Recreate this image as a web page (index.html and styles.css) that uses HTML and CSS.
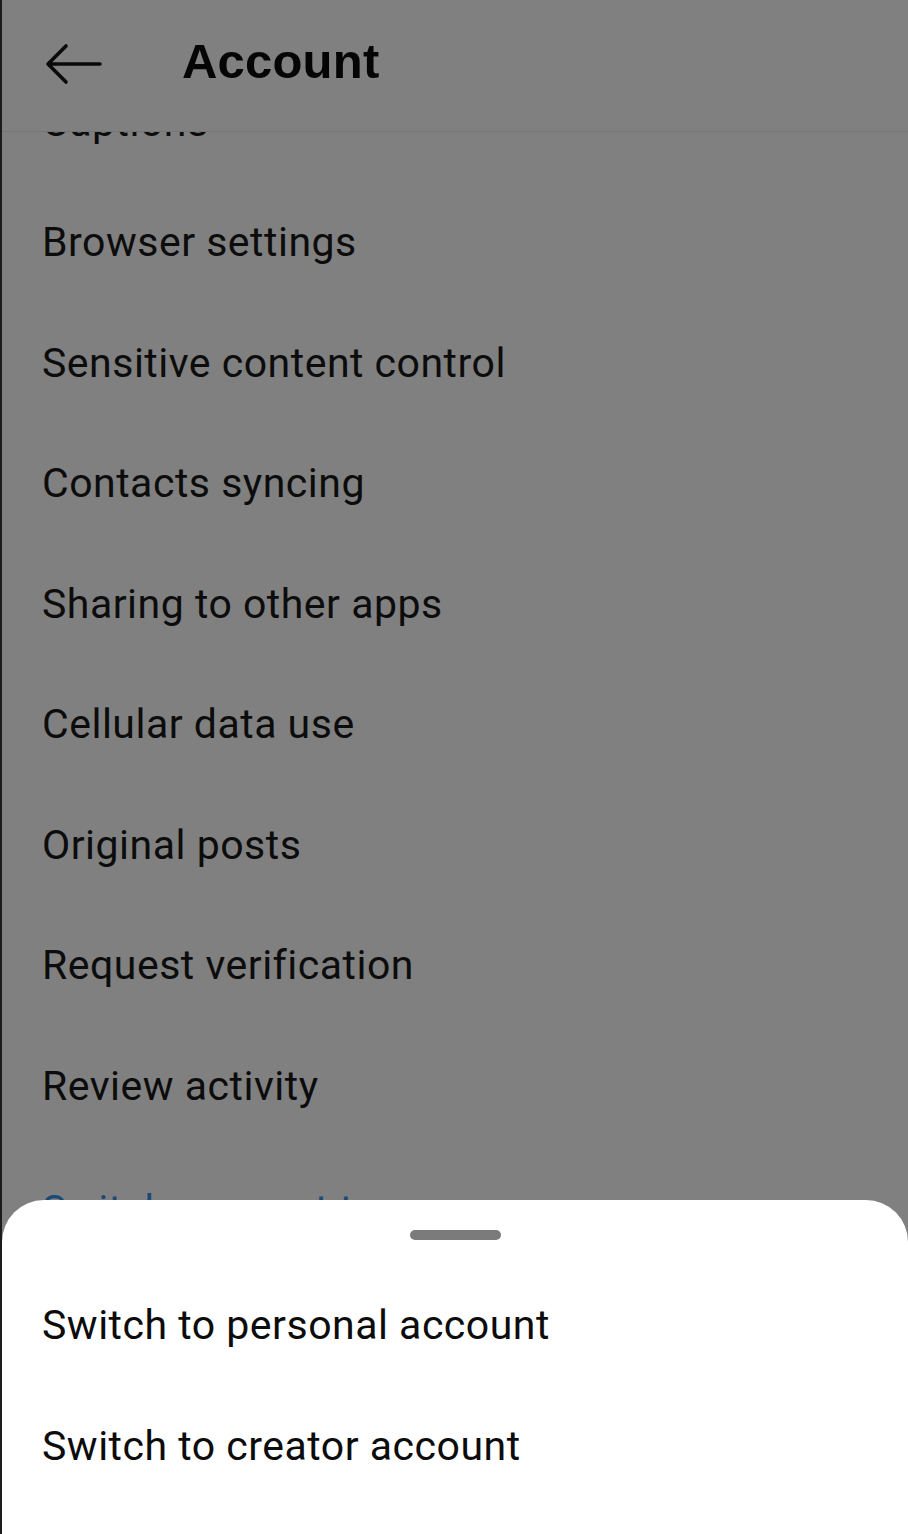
FILE: index.html
```html
<!DOCTYPE html>
<html>
<head>
<meta charset="utf-8">
<link rel="stylesheet" href="styles.css">
</head>
<body>
<div class="screen">
  <header class="topbar">
    <svg class="back" width="58" height="42" viewBox="0 0 58 42">
      <path d="M56 21 H4 M22 3 L4 21 L22 39" fill="none" stroke="#0a0a0a" stroke-width="3.6" stroke-linecap="round" stroke-linejoin="round"/>
    </svg>
    <h1 class="title">Account</h1>
  </header>
  <div class="scroll">
    <ul class="list">
      <li class="row">Captions</li>
      <li class="row">Browser settings</li>
      <li class="row">Sensitive content control</li>
      <li class="row">Contacts syncing</li>
      <li class="row">Sharing to other apps</li>
      <li class="row">Cellular data use</li>
      <li class="row">Original posts</li>
      <li class="row">Request verification</li>
      <li class="row">Review activity</li>
      <li class="row link">Switch account type</li>
    </ul>
  </div>
  <div class="sheet">
    <div class="handle"></div>
    <div class="sheet-row">Switch to personal account</div>
    <div class="sheet-row">Switch to creator account</div>
  </div>
</div>
</body>
</html>
```

FILE: styles.css
```css
* { box-sizing: border-box; }
html, body { margin: 0; padding: 0; }
body {
  width: 908px;
  height: 1534px;
  overflow: hidden;
  background: #808080;
  font-family: Roboto, "Noto Sans", sans-serif;
}
.screen {
  position: relative;
  width: 908px;
  height: 1534px;
  border-left: 2px solid #1c1c1c;
  background: #808080;
  display: flex;
  flex-direction: column;
  overflow: hidden;
}
.topbar {
  height: 132px;
  flex: none;
  display: flex;
  align-items: center;
  padding-left: 42px;
  border-bottom: 1px solid #757575;
  padding-bottom: 4px;
}
.back { display: block; flex: none; }
.title {
  margin: 0 0 5px 80px;
  font-family: "Liberation Sans", Arial, sans-serif;
  font-weight: 700;
  font-size: 49px;
  color: #050505;
  letter-spacing: 0.2px;
}
.scroll {
  flex: 1;
  overflow: hidden;
}
.list {
  list-style: none;
  margin: -70.5px 0 0 0;
  padding: 0;
}
.row {
  height: 120.5px;
  display: flex;
  align-items: center;
  padding-left: 40px;
  font-size: 41px;
  letter-spacing: 0.5px;
  color: #0c0c0c;
}
.row.link {
  color: #1b4a78;
  margin-top: 4px;
}
.sheet {
  position: absolute;
  left: 0;
  right: 0;
  bottom: 0;
  height: 334px;
  background: #ffffff;
  border-radius: 42px 42px 0 0;
  display: flex;
  flex-direction: column;
  padding-top: 30px;
}
.handle {
  width: 91px;
  height: 10px;
  border-radius: 5px;
  background: #7b7b7b;
  align-self: center;
  margin-bottom: 25px;
}
.sheet-row {
  height: 120.5px;
  display: flex;
  align-items: center;
  padding-left: 40px;
  font-size: 41px;
  letter-spacing: 0.5px;
  color: #0c0c0c;
}
```
